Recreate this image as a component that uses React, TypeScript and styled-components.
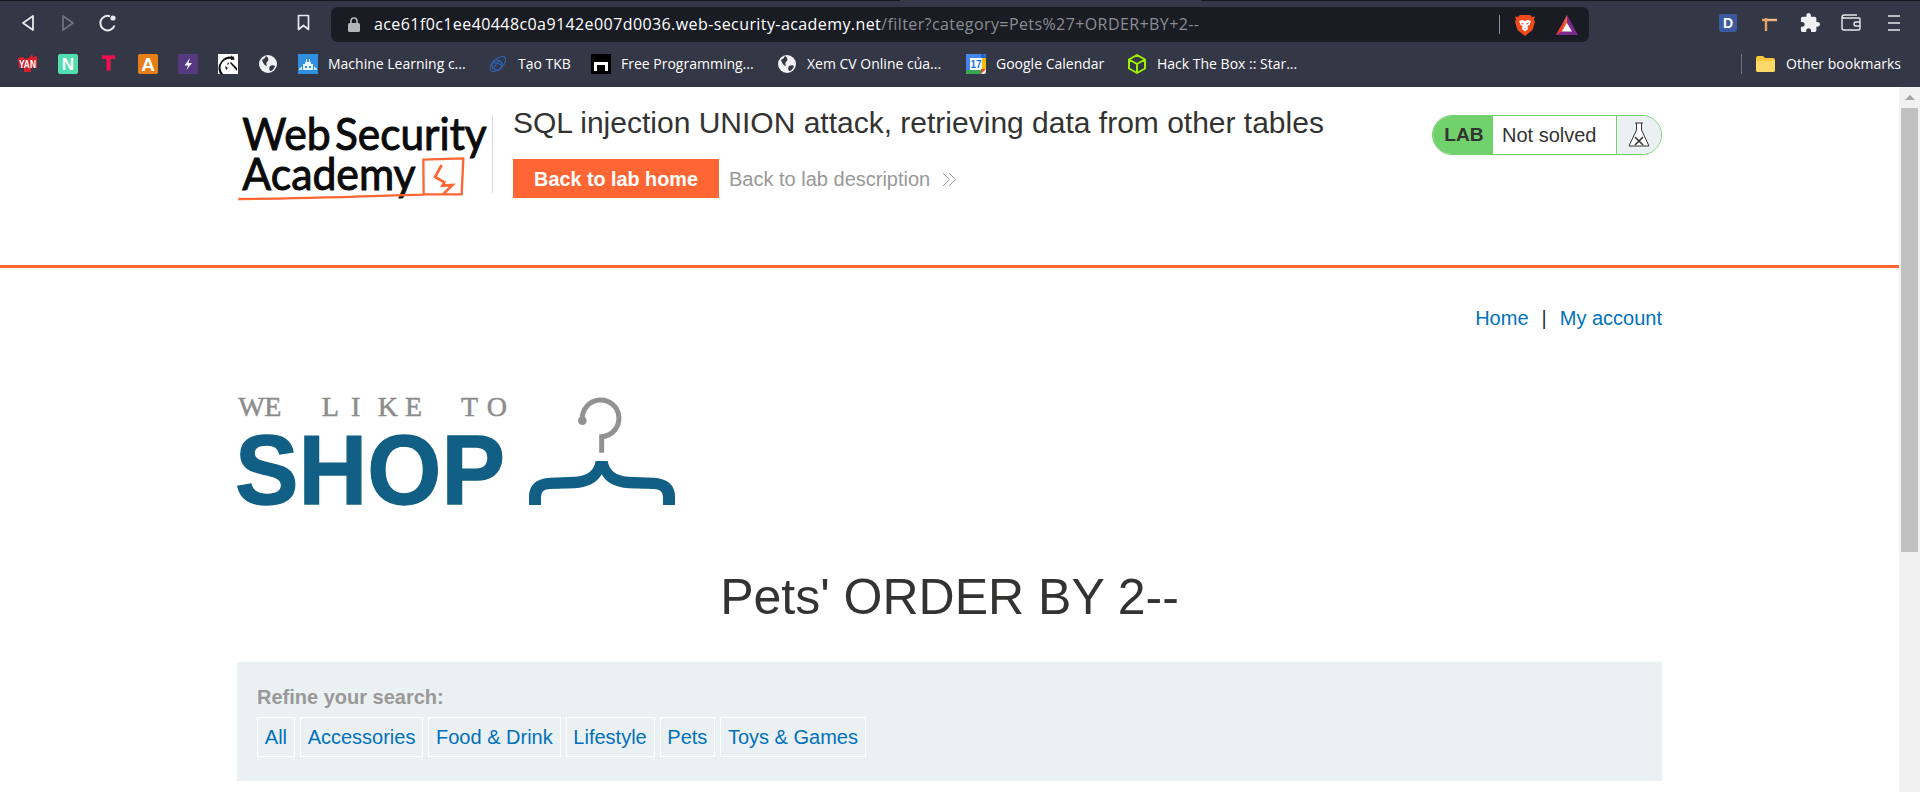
import React from "react";
import styled, { createGlobalStyle } from "styled-components";

const Global = createGlobalStyle`
  html, body { margin: 0; padding: 0; height: 100%; overflow: hidden; background: #fff; }
  * { box-sizing: border-box; }
`;
const Page = styled.div`
  width: 1920px; height: 792px; display: flex; flex-direction: column; overflow: hidden;
  font-family: "Liberation Sans", Arial, sans-serif; color: #333332;
`;
const Chrome = styled.header`
  height: 87px; flex: none; background: #343746; display: flex; flex-direction: column;
  font-family: "Open Sans", "Noto Sans", sans-serif;
`;
const TabStrip = styled.div`height: 1px; display: flex; flex: none;`;
const TabSeg = styled.span<{ $w: number; $light?: boolean }>`
  width: ${(p) => p.$w}px; background: ${(p) => (p.$light ? "#343746" : "#16181f")};
`;
const Toolbar = styled.div`height: 43px; flex: none; display: flex; align-items: center; padding-left: 8px;`;
const Slot = styled.span<{ $w?: number; $ml?: number }>`
  width: ${(p) => p.$w ?? 40}px; margin-left: ${(p) => p.$ml ?? 0}px; height: 24px; flex: none;
  display: flex; align-items: center; justify-content: center; color: #e6e7ea;
`;
const UrlBar = styled.div`
  width: 1258px; margin-left: 16px; height: 35px; margin-top: 4px; flex: none; background: #1a1c24; border-radius: 7px;
  display: flex; align-items: center; padding-left: 17px; font-size: 16px; letter-spacing: 0.41px; color: #fff; white-space: nowrap;
`;
const UrlText = styled.span`margin-left: 14px; width: 1125px; position: relative; top: -1px;`;
const UrlPath = styled.span`color: #8b8d93;`;
const UrlSep = styled.span`width: 1px; height: 19px; background: #8d8f95; flex: none;`;
const Bookmarks = styled.nav`
  height: 43px; flex: none; display: flex; align-items: center; padding: 0 19px 4px 18px;
  font-size: 14px; color: #fff; white-space: nowrap;
`;
const Bookmark = styled.span<{ $w: number }>`
  width: ${(p) => p.$w}px; flex: none; display: flex; align-items: center; gap: 10px;
`;
const Other = styled.span`margin-left: auto; display: flex; align-items: center; gap: 11px;`;
const BarSep = styled.span`width: 1px; height: 20px; background: #6f717c; margin-right: 3px;`;

const Body = styled.div`flex: 1; display: flex; min-height: 0;`;
const Main = styled.main`flex: 1; min-width: 0; overflow: hidden;`;
const Scrollbar = styled.aside`width: 21px; flex: none; background: #f1f1f1; display: flex; flex-direction: column; align-items: center;`;
const ScrollArrow = styled.span`
  height: 21px; flex: none; display: flex; align-items: center; justify-content: center;
  &::before { content: ""; border: 5px solid transparent; border-top: 0; border-bottom: 5px solid #a3a3a3; }
`;
const ScrollThumb = styled.span`width: 17px; height: 444px; background: #c1c1c1; flex: none;`;

const LabHeader = styled.section`height: 181px; border-bottom: 3px solid #ff6633; padding-top: 23px;`;
const Container = styled.div`width: 1425px; margin: 0 auto;`;
const HeaderRow = styled(Container)`display: flex; align-items: flex-start; position: relative;`;
const LogoMark = styled.svg`width: 255px; height: 100px; flex: none; display: block;`;
const LogoDivider = styled.span`width: 1px; height: 78px; background: #d9d9d9; margin-top: 5px; flex: none;`;
const Info = styled.div`margin-left: 20px; flex: 1;`;
const LabTitle = styled.h2`
  margin: 0 0 23px; font-weight: 400; font-size: 30px; line-height: 26px; color: #333332; white-space: nowrap;
`;
const LabActions = styled.div`display: flex; align-items: center;`;
const HomeButton = styled.a`
  width: 206px; height: 39px; padding-top: 1px; background: #ff6633; color: #fff; font-weight: 700; font-size: 19.8px;
  display: flex; align-items: center; justify-content: center; flex: none;
`;
const DescLink = styled.a`margin-left: 10px; padding-top: 1px; color: #999; font-size: 20px; display: flex; align-items: center; gap: 12px;`;
const Status = styled.div`
  width: 230px; height: 40px; margin-top: 5px; flex: none; border: 1px solid #70d16d; border-radius: 20px; overflow: hidden;
  display: flex; font-size: 20px;
`;
const StatusLab = styled.span`
  width: 60px; background: #70d16d; font-weight: 700; font-size: 19.2px; display: flex; align-items: center; justify-content: center; padding-left: 2px;
`;
const StatusText = styled.span`flex: 1; display: flex; align-items: center; padding-left: 9px; background: #fff;`;
const StatusFlask = styled.span`
  width: 45px; background: #ebf0f2; border-left: 1px solid #70d16d; display: flex; align-items: center; justify-content: center;
`;

const TopLinks = styled(Container)`
  display: flex; justify-content: flex-end; gap: 13px; padding-top: 38px; font-size: 20px; line-height: 24px;
`;
const Link = styled.a`color: #0071bc;`;
const Pipe = styled.span`color: #333332;`;
const ShopLogo = styled.svg`width: 440px; height: 115px; display: block; margin-top: 65px;`;
const Heading = styled.h1`
  margin: 57px 0 35px; text-align: center; font-weight: 400; font-size: 50px; line-height: 60px; color: #333332;
`;
const Filters = styled.section`height: 119px; background: #ebf0f2; padding: 23px 20px 0;`;
const FilterLabel = styled.div`color: #999; font-weight: 700; font-size: 20px; line-height: 24px; margin-bottom: 8px;`;
const FilterRow = styled.div`display: flex; gap: 5px;`;
const Chip = styled.a`
  height: 40px; padding: 0 6.8px; border: 1px solid #fff; color: #0071bc; font-size: 20px;
  display: flex; align-items: center; white-space: nowrap;
`;

const Fav = styled.svg`width: 20px; height: 20px; flex: none; display: block;`;

const Globe = () => (
  <Fav viewBox="0 0 20 20">
    <circle cx="10" cy="10" r="9" fill="#f1f1f3" />
    <path d="M4 6c2-1 3-2 4-4 2 1 3 3 2 5-2 1-2 3-1 5-2 0-4-3-5-6zM12 12c2-1 4-1 5 0-1 3-3 5-5 5-1-2-1-3 0-5z" fill="#343746" />
  </Fav>
);

export default function App() {
  return (
    <Page>
      <Global />
      <Chrome>
        <TabStrip>
          <TabSeg $w={900} />
          <TabSeg $w={301} $light />
          <TabSeg $w={719} />
        </TabStrip>
        <Toolbar>
          <Slot>
            <svg width="16" height="18" viewBox="0 0 16 18" fill="none" stroke="#e8e9ec" strokeWidth="1.8" strokeLinejoin="round">
              <path d="M13 2 3 9l10 7z" />
            </svg>
          </Slot>
          <Slot>
            <svg width="16" height="18" viewBox="0 0 16 18" fill="none" stroke="#6d6f7b" strokeWidth="1.8" strokeLinejoin="round">
              <path d="M3 2l10 7-10 7z" />
            </svg>
          </Slot>
          <Slot>
            <svg width="20" height="20" viewBox="0 0 20 20" fill="none" stroke="#e8e9ec" strokeWidth="2">
              <path d="M16.5 12.5A7.3 7.3 0 1 1 12 3.2" />
              <circle cx="15" cy="5" r="2.6" fill="#e8e9ec" stroke="none" />
            </svg>
          </Slot>
          <Slot $w={24} $ml={163}>
            <svg width="13" height="17" viewBox="0 0 13 17" fill="none" stroke="#e8e9ec" strokeWidth="1.7" strokeLinejoin="round">
              <path d="M1.5 1.5h10v14l-5-4-5 4z" />
            </svg>
          </Slot>
          <UrlBar>
            <svg width="12" height="15" viewBox="0 0 12 15">
              <path d="M3 6V4a3 3 0 0 1 6 0v2" fill="none" stroke="#b4b5b9" strokeWidth="1.6" />
              <rect y="6" width="12" height="9" rx="1.5" fill="#b4b5b9" />
            </svg>
            <UrlText>
              ace61f0c1ee40448c0a9142e007d0036.web-security-academy.net
              <UrlPath>/filter?category=Pets%27+ORDER+BY+2--</UrlPath>
            </UrlText>
            <UrlSep />
            <Slot $w={20} $ml={15}>
              <svg width="20" height="22" viewBox="0 0 20 22">
                <path d="M5 1h10l2 2 3-.5-1 3 1 2.500-2.500 8L10 22l-7.500-6L0 8l1-2.500-1-3 3 .5z" fill="#f1481c" />
                <path d="M4 7l3-1 3 1 3-1 3 1-1.500 4-2 1 .5 3-3 2.500L7 15l.5-3-2-1z" fill="#fff" />
                <path d="M6.500 8.500l2 1v1l-2-.5zM13.500 8.500l-2 1v1l2-.5zM9 14h2l-1 1z" fill="#f1481c" />
              </svg>
            </Slot>
            <Slot $w={22} $ml={21}>
              <svg width="22" height="20" viewBox="0 0 22 20">
                <path d="M11 0 0 20h22z" fill="#7b2a8c" />
                <path d="M11 0 0 20l5-3z" fill="#f0392b" />
                <path d="M11 0 5 17l6-3z" fill="#f26a2e" />
                <path d="M11 8l-5 8.500h10z" fill="#fff" />
              </svg>
            </Slot>
          </UrlBar>
          <Slot $w={18} $ml={130}>
            <svg width="18" height="18" viewBox="0 0 18 18">
              <rect width="18" height="18" rx="2" fill="#3b5a9f" />
              <text x="9" y="14" textAnchor="middle" fontSize="14" fontWeight="700" fontFamily="Liberation Sans" fill="#fff">D</text>
            </svg>
          </Slot>
          <Slot $w={18} $ml={23}>
            <svg width="17" height="18" viewBox="0 0 17 18" fill="none">
              <path d="M1 6h15M5 4v13" stroke="#e8a263" strokeWidth="2.400" />
              <path d="M6 5.800h10" stroke="#f7d9b8" strokeWidth="0.8" />
            </svg>
          </Slot>
          <Slot $w={20} $ml={22}>
            <svg width="20" height="20" viewBox="1 1 22 22" fill="#f1f1f3">
              <path d="M20.500 11H19V7c0-1.100-.9-2-2-2h-4V3.500C13 2.120 11.880 1 10.500 1S8 2.120 8 3.500V5H4c-1.100 0-1.990.9-1.990 2v3.800H3.500c1.490 0 2.700 1.210 2.700 2.700s-1.210 2.700-2.700 2.700H2V20c0 1.100.9 2 2 2h3.800v-1.500c0-1.490 1.210-2.700 2.700-2.700 1.490 0 2.700 1.210 2.700 2.700V22H17c1.100 0 2-.9 2-2v-4h1.500c1.380 0 2.500-1.120 2.500-2.500S21.880 11 20.500 11z" />
            </svg>
          </Slot>
          <Slot $w={22} $ml={20}>
            <svg width="20" height="17" viewBox="0 0 20 17" fill="none" stroke="#e8e9ec" strokeWidth="1.4">
              <path d="M18 4H3.500A2.500 2.500 0 0 1 1 2.500 M1 2.500V14a2 2 0 0 0 2 2h14a2 2 0 0 0 2-2V5a1 1 0 0 0-1-1 M1 2.500A2 2 0 0 1 3 1h13" />
              <path d="M19 8h-4a2 2 0 0 0 0 4h4" />
            </svg>
          </Slot>
          <Slot $w={14} $ml={25}>
            <svg width="12" height="16" viewBox="0 0 12 16" stroke="#e8e9ec" strokeWidth="1.6">
              <path d="M0 1h12M0 8h12M0 15h12" />
            </svg>
          </Slot>
        </Toolbar>
        <Bookmarks>
          <Bookmark $w={40}>
            <Fav viewBox="0 0 20 20">
              <path d="M0 4l5-1 2 2 4-1 3-4 1 3 4-1v12H13v4H6v-4H1z" fill="#d81f2c" />
              <text x="9.500" y="14" textAnchor="middle" fontSize="10" fontWeight="700" fontFamily="Liberation Sans" textLength="17" lengthAdjust="spacingAndGlyphs" fill="#fff">YAN</text>
            </Fav>
          </Bookmark>
          <Bookmark $w={40}>
            <Fav viewBox="0 0 20 20">
              <rect width="20" height="20" rx="2" fill="#52deaf" />
              <text x="10" y="16" textAnchor="middle" fontSize="17" fontWeight="700" fontFamily="Liberation Sans" fill="#fff">N</text>
            </Fav>
          </Bookmark>
          <Bookmark $w={40}>
            <Fav viewBox="0 0 20 20">
              <text x="10" y="16" textAnchor="middle" fontSize="20" fontWeight="700" fontFamily="Liberation Sans" fill="#f80c4f" stroke="#f80c4f" strokeWidth="0.9">T</text>
            </Fav>
          </Bookmark>
          <Bookmark $w={40}>
            <Fav viewBox="0 0 20 20">
              <rect width="20" height="20" rx="2" fill="#e87f16" />
              <text x="10" y="17" textAnchor="middle" fontSize="19" fontWeight="700" fontFamily="Liberation Sans" fill="#fff">A</text>
            </Fav>
          </Bookmark>
          <Bookmark $w={40}>
            <Fav viewBox="0 0 20 20">
              <rect width="20" height="20" fill="#553a80" />
              <path d="M12 4 6.500 11.500H10L8.500 16l5.500-7h-3.500z" fill="#f2f0f7" />
            </Fav>
          </Bookmark>
          <Bookmark $w={40}>
            <Fav viewBox="0 0 20 20">
              <rect width="20" height="20" fill="#fff" />
              <path d="M16 3A12 12 0 0 0 2 20h3A9 9 0 0 1 16 6zM19 17l-7-8 1-1 6 6z" fill="#111" />
              <path d="M13 1l1 2 2-1-1 2 2 1-4 1z" fill="#111" />
              <path d="M7 12l3 2-2 2zM10 8l1 2-2 1z" fill="#111" />
            </Fav>
          </Bookmark>
          <Bookmark $w={40}><Globe /></Bookmark>
          <Bookmark $w={190}>
            <Fav viewBox="0 0 20 20">
              <rect width="20" height="20" fill="#2f8fe0" />
              <path d="M5 10h10v6H5zM7 8h6v2H7zM8 5h1v3H8zM11 5h1v3h-1z" fill="#e8f2fb" />
              <path d="M1 15l3-3v4H1zM19 15l-3-3v4h3z" fill="#cfe4f7" />
              <rect x="7" y="12" width="2" height="2" fill="#2f8fe0" />
              <rect x="11" y="12" width="2" height="2" fill="#2f8fe0" />
            </Fav>
            Machine Learning c...
          </Bookmark>
          <Bookmark $w={103}>
            <Fav viewBox="0 0 20 20" fill="none" stroke="#2f5fa8" strokeWidth="1.200">
              <ellipse cx="10" cy="10" rx="9.500" ry="5" transform="rotate(-45 10 10)" />
              <circle cx="9" cy="11" r="5" strokeWidth="1.600" />
              <path d="M5 9c3-1 5 0 8 2M6 14c1-3 3-5 5-7" />
            </Fav>
            Tạo TKB
          </Bookmark>
          <Bookmark $w={186}>
            <Fav viewBox="0 0 20 20">
              <rect width="20" height="20" fill="#000" />
              <path d="M3 8h14v9h-3v-6H6v6H3z" fill="#fff" />
            </Fav>
            Free Programming...
          </Bookmark>
          <Bookmark $w={189}>
            <Globe />
            Xem CV Online của...
          </Bookmark>
          <Bookmark $w={161}>
            <Fav viewBox="0 0 20 20">
              <rect width="20" height="20" rx="2" fill="#fff" />
              <path d="M0 4V2a2 2 0 0 1 2-2h13v4z" fill="#4285f4" />
              <path d="M15 0h3a2 2 0 0 1 2 2v2h-5z" fill="#1967d2" />
              <path d="M16 4h4v11h-4z" fill="#fbbc04" />
              <path d="M0 4h4v12H0z" fill="#4285f4" />
              <path d="M0 16h15v4H2a2 2 0 0 1-2-2z" fill="#34a853" />
              <path d="M15 15h5l-5 5z" fill="#ea4335" />
              <text x="10" y="14" textAnchor="middle" fontSize="10" fontWeight="700" fontFamily="Liberation Sans" fill="#1a73e8">17</text>
            </Fav>
            Google Calendar
          </Bookmark>
          <Bookmark $w={170}>
            <Fav viewBox="0 0 20 20" fill="none" stroke="#9fef00" strokeWidth="2" strokeLinejoin="round">
              <path d="M10 1l8 4.500v9L10 19l-8-4.500v-9zM2 5.500l8 4.500 8-4.500M10 10v9" />
            </Fav>
            Hack The Box :: Star...
          </Bookmark>
          <Other>
            <BarSep />
            <svg width="19" height="16" viewBox="0 0 19 16">
              <path d="M0 2a2 2 0 0 1 2-2h5l2 2h8a2 2 0 0 1 2 2v10a2 2 0 0 1-2 2H2a2 2 0 0 1-2-2z" fill="#f9c83e" />
              <path d="M0 5h19v9a2 2 0 0 1-2 2H2a2 2 0 0 1-2-2z" fill="#fcd968" />
            </svg>
            Other bookmarks
          </Other>
        </Bookmarks>
      </Chrome>
      <Body>
        <Main>
          <LabHeader>
            <HeaderRow>
              <LogoMark viewBox="51 45 765 300">
                <g fontFamily="Lato, sans-serif" fontSize="134" fill="#0b0b0b" stroke="#0b0b0b" strokeWidth="3">
                  <text x="67" y="165" textLength="265" lengthAdjust="spacingAndGlyphs">Web</text>
                  <text x="345" y="165" textLength="455" lengthAdjust="spacingAndGlyphs">Security</text>
                  <text x="67" y="285" textLength="520" lengthAdjust="spacingAndGlyphs">Academy</text>
                </g>
                <path d="M55 312c180 0 380-8 556-13l-1-105 120-4-5 108-115 0" fill="none" stroke="#ff6633" strokeWidth="7" strokeLinejoin="round" />
                <path d="M665 210l-20 36 28 16-6 10 30-2-28 28" fill="none" stroke="#ff6633" strokeWidth="8" />
              </LogoMark>
              <LogoDivider />
              <Info>
                <LabTitle>SQL injection UNION attack, retrieving data from other tables</LabTitle>
                <LabActions>
                  <HomeButton>Back to lab home</HomeButton>
                  <DescLink>
                    Back to lab description
                    <svg width="15" height="15" viewBox="0 0 15 15" fill="none" stroke="#999" strokeWidth="1">
                      <path d="M1 1l6.500 6.500L1 14M7 1l6.500 6.500L7 14" />
                    </svg>
                  </DescLink>
                </LabActions>
              </Info>
              <Status>
                <StatusLab>LAB</StatusLab>
                <StatusText>Not solved</StatusText>
                <StatusFlask>
                  <svg width="22" height="26" viewBox="0 0 22 26" fill="none" stroke="#333" strokeWidth="1">
                    <path d="M7 1h8M8.500 1v7L1 24h20L13.500 8V1" fill="#fff" />
                    <path d="M7 15l8 8M15 15l-8 8" strokeWidth="1.600" />
                  </svg>
                </StatusFlask>
              </Status>
            </HeaderRow>
          </LabHeader>
          <TopLinks>
            <Link>Home</Link>
            <Pipe>|</Pipe>
            <Link>My account</Link>
          </TopLinks>
          <Container>
            <ShopLogo viewBox="36 30 1320 345">
              <text x="40 118 200 290 378 458 540 620 708 785" y="92" fontFamily="Liberation Serif, serif" fontSize="84" fill="#8c8c8c" stroke="#8c8c8c" strokeWidth="1.5">WE LIKE TO</text>
              <text x="30" y="358" fontFamily="Liberation Sans, sans-serif" fontWeight="700" fontSize="297" textLength="810" lengthAdjust="spacingAndGlyphs" fill="#115f85" stroke="#115f85" strokeWidth="4">SHOP</text>
              <path d="M1072 105A55 55 0 1 1 1130 155V203" fill="none" stroke="#929292" strokeWidth="15" />
              <circle cx="1072" cy="107" r="13" fill="#929292" />
              <path d="M912 360V335Q912 282 975 278L1050 275Q1105 272 1112 228H1148Q1155 272 1210 275L1285 278Q1350 282 1350 335V360H1314V335Q1314 312 1285 312L1210 310Q1150 305 1130 268Q1110 305 1050 310L975 312Q948 312 948 335V360Z" fill="#115f85" />
            </ShopLogo>
            <Heading>Pets&apos; ORDER BY 2--</Heading>
            <Filters>
              <FilterLabel>Refine your search:</FilterLabel>
              <FilterRow>
                {["All", "Accessories", "Food & Drink", "Lifestyle", "Pets", "Toys & Games"].map((c) => (
                  <Chip key={c}>{c}</Chip>
                ))}
              </FilterRow>
            </Filters>
          </Container>
        </Main>
        <Scrollbar>
          <ScrollArrow />
          <ScrollThumb />
        </Scrollbar>
      </Body>
    </Page>
  );
}
